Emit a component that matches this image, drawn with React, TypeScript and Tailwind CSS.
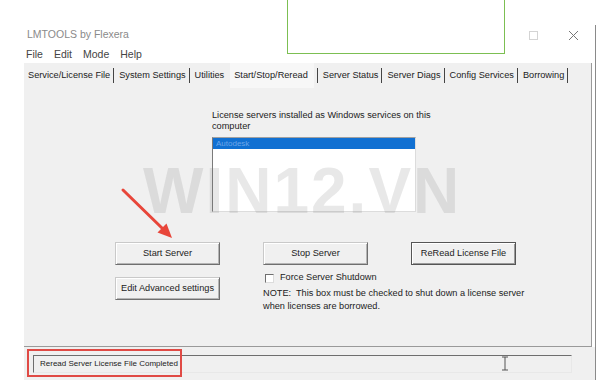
import React from "react";

const tabs = [
  { label: "Service/License File", sep: true },
  { label: "System Settings", sep: true },
  { label: "Utilities", sep: false },
  { label: "Start/Stop/Reread", sep: true, active: true },
  { label: "Server Status", sep: true },
  { label: "Server Diags", sep: true },
  { label: "Config Services", sep: true },
  { label: "Borrowing", sep: true },
];

function Btn({ children, def }: { children: React.ReactNode; def?: boolean }) {
  return (
    <div
      className={
        "w-[105px] h-[23px] flex items-center justify-center bg-[#f0f0f0] text-[9.2px] text-[#222] " +
        (def
          ? "border border-[#555] shadow-[inset_1px_1px_0_#fff,inset_-1px_-1px_0_#9a9a9a]"
          : "border border-[#c9c9c9] border-r-[#6f6f6f] border-b-[#6f6f6f] shadow-[inset_1px_1px_0_#fff,inset_-1px_-1px_0_#b5b5b5]")
      }
    >
      {children}
    </div>
  );
}

export default function App() {
  return (
    <div className="w-[600px] h-[380px] relative overflow-hidden bg-white font-['Liberation_Sans',Arial,sans-serif] flex flex-col">
      <div className="h-[25px]" />
      <div className="ml-[24px] w-[572px] flex-1 flex flex-col border-r border-[#8a8a8a]">
        {/* title bar */}
        <div className="h-[20px] flex items-center justify-between pl-[3px] pr-[16px] text-[10.5px] text-[#8a8a8a]">
          <span>LMTOOLS by Flexera</span>
          <div className="flex items-center gap-[30px]">
            <div className="w-[9px] h-[9px] border border-[#d4d4d4]" />
            <svg width="11" height="11" viewBox="0 0 11 11">
              <path d="M1 1 L10 10 M10 1 L1 10" stroke="#777" strokeWidth="1" />
            </svg>
          </div>
        </div>
        {/* menu */}
        <div className="h-[18px] flex items-center gap-[11px] pl-[2px] pt-[2px] text-[10.5px] text-[#444]">
          <span>File</span>
          <span>Edit</span>
          <span>Mode</span>
          <span>Help</span>
        </div>
        {/* tabs */}
        <div className="h-[25px] bg-[#f0f0f0] flex items-end pl-[4px] mr-[3px] border-r border-[#9a9a9a]">
          {tabs.map((t) => (
            <div key={t.label} className="flex items-center h-[25px]">
              <span
                className={
                  "text-[9.2px] text-[#222] h-full flex items-center pt-[1px] " +
                  (t.active ? "bg-[#f7f7f7] pl-[4px] pr-[6px] ml-[3px]" : "")
                }
              >
                {t.label}
              </span>
              {t.sep ? (
                <span className="w-px h-[15px] bg-[#444] ml-[3px] mr-[5px]" />
              ) : (
                <span className="w-[3px]" />
              )}
            </div>
          ))}
        </div>
        {/* panel */}
        <div className="h-[259px] bg-[#f0f0f0] mr-[3px] border-r border-b border-[#9a9a9a] flex flex-col relative">
          <div className="ml-[188px] mt-[22px] w-[224px] text-[9.2px] leading-[11px] text-[#222]">
            License servers installed as Windows services on this computer
          </div>
          <div className="ml-[188px] mt-[5px] w-[204px] h-[75px] bg-white border border-[#dcdcdc] border-l-[#7a7a7a] border-t-[#a0a0a0]">
            <div className="h-[11px] bg-[#1170d2] text-[8px] leading-[11px] text-[#6ea6e8] pl-[3px]">
              Autodesk
            </div>
          </div>
          <div className="ml-[91px] mt-[30px] flex gap-[43px]">
            <Btn>Start Server</Btn>
            <Btn>Stop Server</Btn>
            <Btn def>ReRead License File</Btn>
          </div>
          <div className="ml-[91px] flex gap-[43px] items-start">
            <div className="mt-[12px]">
              <Btn>Edit Advanced settings</Btn>
            </div>
            <div className="flex flex-col">
              <div className="mt-[8px] flex items-center gap-[6px] ml-[2px] h-[10px]">
                <div className="w-[9px] h-[9px] bg-white border border-[#6f6f6f] border-r-[#dcdcdc] border-b-[#dcdcdc]" />
                <span className="text-[9.2px] text-[#222]">Force Server Shutdown</span>
              </div>
              <div className="mt-[4px] w-[280px] text-[9.2px] leading-[12.5px] text-[#222]">
                NOTE:&nbsp; This box must be checked to shut down a license server when licenses are borrowed.
              </div>
            </div>
          </div>
          {/* watermark */}
          <div className="absolute left-[119px] top-[71px] text-[64px] leading-none font-bold tracking-[2px] text-[rgba(120,120,120,0.17)] pointer-events-none">
            WIN12.VN
          </div>
        </div>
        {/* status bar */}
        <div className="flex-1 bg-[#f0f0f0] pt-[8px]">
          <div className="ml-[9px] w-[539px] h-[18px] border border-t-[#6e6e6e] border-l-[#6e6e6e] border-r-[#e8e8e8] border-b-[#e8e8e8] flex items-center pl-[6px] text-[8px] text-[#222]">
            Reread Server License File Completed
          </div>
        </div>
      </div>

      {/* green overlay rectangle */}
      <div className="absolute left-[287px] top-[-1px] w-[218px] h-[55px] bg-white border border-[#7cbf52]" />

      {/* red arrow */}
      <svg className="absolute left-0 top-0" width="600" height="380" viewBox="0 0 600 380" style={{ pointerEvents: "none" }}>
        <line x1="123" y1="190" x2="163" y2="229" stroke="#e8463a" strokeWidth="3" strokeLinecap="round" />
        <polygon points="172,238 157.5,232.5 166.5,223.5" fill="#e8463a" />
        {/* I-beam cursor */}
        <path d="M502 357 H508 M505 357 V370 M502 370 H508" stroke="#555" strokeWidth="1" fill="none" />
      </svg>

      {/* red annotation box */}
      <div className="absolute left-[27px] top-[349px] w-[155px] h-[28px] border-2 border-[#e04a45]" />
    </div>
  );
}
